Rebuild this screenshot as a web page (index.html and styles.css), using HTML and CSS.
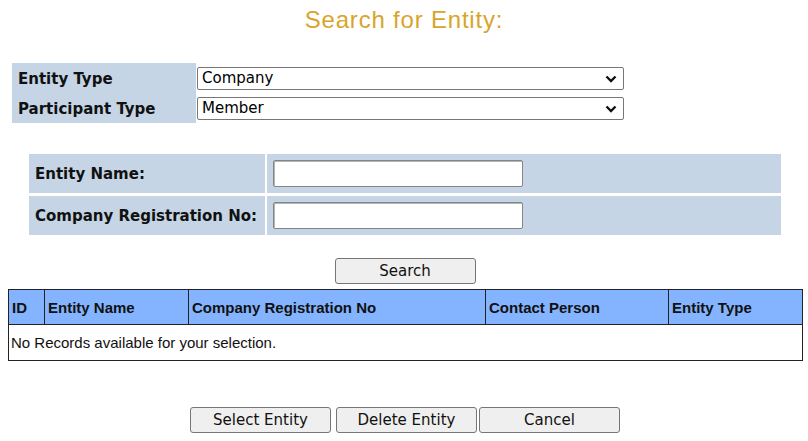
FILE: index.html
```html
<!DOCTYPE html>
<html>
<head>
<meta charset="utf-8">
<title>Search for Entity</title>
<link rel="stylesheet" href="styles.css">
</head>
<body>
<div class="page">
  <h1 class="title">Search for Entity:</h1>

  <div class="type-grid">
    <div class="type-label">Entity Type</div>
    <div class="type-value">
      <select class="type-select"><option>Company</option></select>
      <svg class="chevron" width="12" height="8" viewBox="0 0 12 8"><path d="M1.5 1.5 L6 6 L10.5 1.5" fill="none" stroke="#111" stroke-width="2.4"/></svg>
    </div>
    <div class="type-label">Participant Type</div>
    <div class="type-value">
      <select class="type-select"><option>Member</option></select>
      <svg class="chevron" width="12" height="8" viewBox="0 0 12 8"><path d="M1.5 1.5 L6 6 L10.5 1.5" fill="none" stroke="#111" stroke-width="2.4"/></svg>
    </div>
  </div>

  <div class="criteria">
    <div class="crit-label">Entity Name:</div>
    <div class="crit-value"><input class="crit-input" type="text"></div>
    <div class="crit-label">Company Registration No:</div>
    <div class="crit-value"><input class="crit-input" type="text"></div>
  </div>

  <div class="search-row">
    <button class="btn btn-search" type="button">Search</button>
  </div>

  <table class="results">
    <colgroup>
      <col class="c-id"><col class="c-name"><col class="c-reg"><col class="c-contact"><col class="c-type">
    </colgroup>
    <thead>
      <tr>
        <th>ID</th>
        <th>Entity Name</th>
        <th>Company Registration No</th>
        <th>Contact Person</th>
        <th>Entity Type</th>
      </tr>
    </thead>
    <tbody>
      <tr>
        <td colspan="5">No Records available for your selection.</td>
      </tr>
    </tbody>
  </table>

  <div class="actions">
    <button class="btn btn-select" type="button">Select Entity</button>
    <button class="btn btn-delete" type="button">Delete Entity</button>
    <button class="btn btn-cancel" type="button">Cancel</button>
  </div>
</div>
</body>
</html>
```
FILE: styles.css
```css
html, body {
  margin: 0;
  padding: 0;
  background: #ffffff;
}

.page {
  padding: 0 8px;
  font-family: "DejaVu Sans", Verdana, sans-serif;
  color: #000;
}

.title {
  margin: 6px 0 0;
  font-family: "Liberation Sans", Arial, sans-serif;
  font-weight: normal;
  font-size: 24px;
  letter-spacing: 0.8px;
  line-height: 28px;
  text-align: center;
  color: #d8a52c;
}

/* top type selectors */
.type-grid {
  display: grid;
  grid-template-columns: 184px 428px;
  grid-auto-rows: 30px;
  margin: 29px 0 0 4px;
}

.type-label {
  background: #c5d5e5;
  display: flex;
  align-items: center;
  padding-left: 6px;
  padding-top: 1px;
  font-weight: bold;
  font-size: 15px;
  color: #111;
}

.type-value {
  position: relative;
  display: flex;
  align-items: center;
  padding-left: 1px;
}

.type-select {
  -webkit-appearance: none;
  appearance: none;
  box-sizing: border-box;
  width: 428px;
  height: 23px;
  font-family: "DejaVu Sans", Verdana, sans-serif;
  font-size: 15px;
  color: #000;
  background: #fff;
  border: 1px solid #767676;
  border-radius: 2px;
  padding: 0 0 0 4px;
}

.chevron {
  position: absolute;
  right: 7px;
  top: 12px;
  pointer-events: none;
}

/* criteria block */
.criteria {
  display: grid;
  grid-template-columns: 236px 514px;
  grid-auto-rows: 39px;
  gap: 3px 2px;
  width: 752px;
  margin: 31px 0 0 21px;
}

.crit-label {
  background: #c5d5e5;
  display: flex;
  align-items: center;
  padding-left: 6px;
  font-weight: bold;
  font-size: 15px;
  color: #111;
  white-space: nowrap;
}

.crit-value {
  background: #c5d5e5;
  display: flex;
  align-items: center;
  padding-left: 6px;
}

.crit-input {
  box-sizing: border-box;
  width: 250px;
  height: 27px;
  margin: 0;
  border: 1px solid #858585;
  border-radius: 2px;
  background: #fff;
  box-shadow: inset 1px 1px 0 #b5b5b5;
}

/* buttons */
.btn {
  box-sizing: border-box;
  width: 141px;
  height: 26px;
  margin: 0;
  padding: 0;
  font-family: "DejaVu Sans", Verdana, sans-serif;
  font-size: 15px;
  color: #111;
  background: #efefef;
  border: 1px solid #767676;
  border-radius: 3px;
}

.search-row {
  display: flex;
  justify-content: center;
  margin-top: 23px;
  padding-left: 2px;
}

/* results table */
.results {
  width: 794px;
  margin-top: 5px;
  border-collapse: collapse;
  table-layout: fixed;
  border: 1px solid #222;
  font-family: "Liberation Sans", Arial, sans-serif;
  font-size: 15px;
}

.c-id { width: 36px; }
.c-name { width: 144px; }
.c-reg { width: 297px; }
.c-contact { width: 183px; }
.c-type { width: 134px; }

.results th {
  height: 34px;
  padding: 0 3px;
  background: #84b4ff;
  border: 1px solid #222;
  text-align: left;
  font-weight: bold;
  color: #111;
}

.results td {
  height: 35px;
  padding: 0 2px;
  text-align: left;
  color: #111;
}

.actions {
  display: flex;
  justify-content: center;
  margin-top: 46px;
  padding-left: 2px;
}

.btn-delete { margin-left: 5px; }
.btn-cancel { margin-left: 2px; }
```
